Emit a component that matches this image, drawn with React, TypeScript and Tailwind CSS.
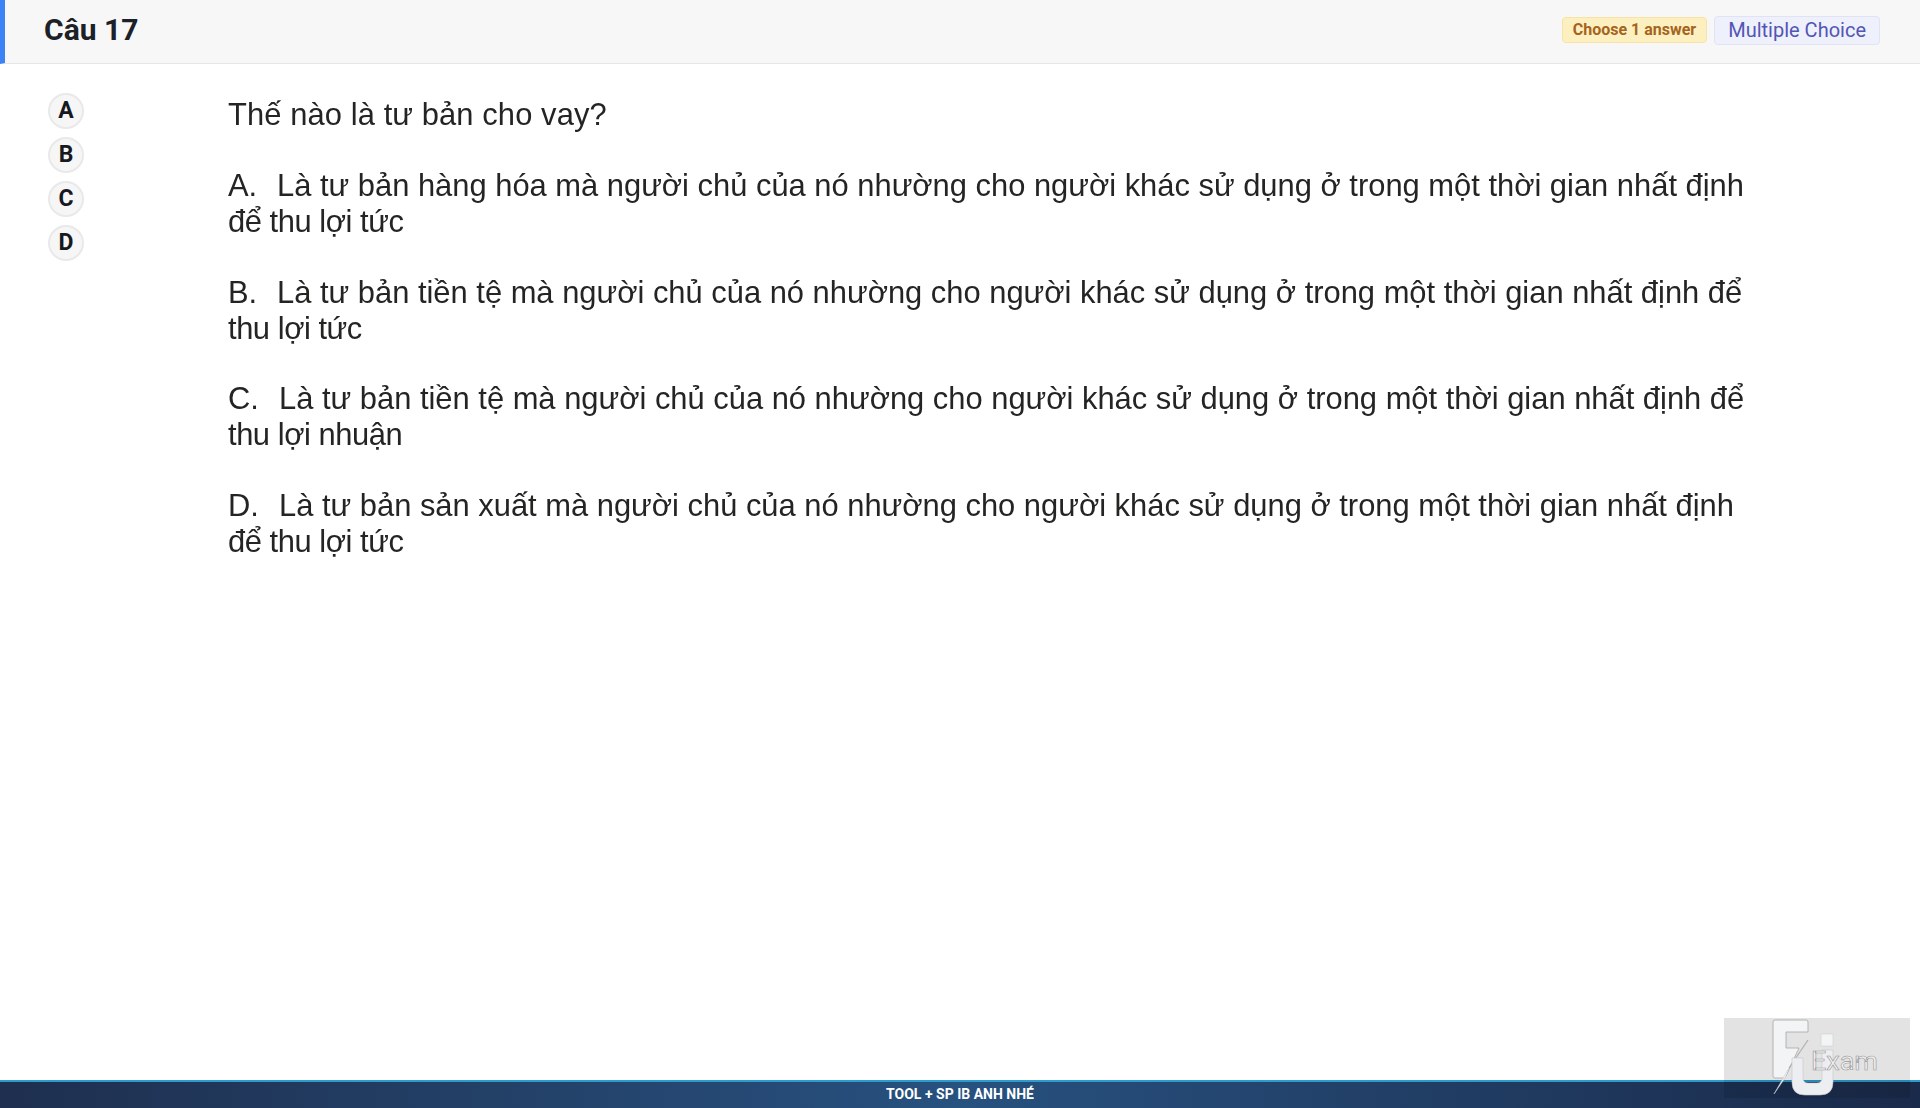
const options = ['A', 'B', 'C', 'D'];

const answers = [
  {
    cls: 'mt-[35px] h-[71px]',
    label: 'A.',
    labelCls: 'w-[49px]',
    first: 'Là tư bản hàng hóa mà người chủ của nó nhường cho người khác sử dụng ở trong một thời gian nhất định',
    second: 'để thu lợi tức',
  },
  {
    cls: 'mt-[36px] h-[71px]',
    label: 'B.',
    labelCls: 'w-[49px]',
    first: 'Là tư bản tiền tệ mà người chủ của nó nhường cho người khác sử dụng ở trong một thời gian nhất định để',
    second: 'thu lợi tức',
  },
  {
    cls: 'mt-[35px] h-[72px]',
    label: 'C.',
    labelCls: 'w-[51px]',
    first: 'Là tư bản tiền tệ mà người chủ của nó nhường cho người khác sử dụng ở trong một thời gian nhất định để',
    second: 'thu lợi nhuận',
  },
  {
    cls: 'mt-[35px] h-[72px]',
    label: 'D.',
    labelCls: 'w-[51px]',
    first: 'Là tư bản sản xuất mà người chủ của nó nhường cho người khác sử dụng ở trong một thời gian nhất định',
    second: 'để thu lợi tức',
  },
];

const FuExamLogo = () => (
  <div className="absolute right-[10px] bottom-[10px] w-[186px] h-[80px] bg-black/[0.11]">
    <svg width="186" height="80" viewBox="0 0 186 80" className="absolute left-0 top-0">
      {/* F */}
      <path
        d="M51 2 H82 Q84 2 84 4 V14 H62 V30 H75 L61 60 H51 Q49 60 49 58 V4 Q49 2 51 2 Z"
        fill="#f3f4f5"
        stroke="#a6a6a6"
        strokeWidth="0.8"
      />
      {/* slash */}
      <path d="M61 60 L50 76 L65 50" fill="#f3f4f5" stroke="#c4c4c4" strokeWidth="0.6" />
      <path d="M84 22 L65 50" stroke="#b0b0b0" strokeWidth="1.2" fill="none" />
      {/* dot */}
      <rect x="97" y="16" width="12" height="12" fill="#f3f4f5" stroke="#d0d0d0" strokeWidth="0.6" />
      {/* U */}
      <path
        d="M68 40 H79 V60 Q79 65 84 65 H93 Q98 65 98 60 V32 H109 V64 Q109 77 96 77 H81 Q68 77 68 64 Z"
        fill="#eceef1"
        stroke="#c8c8c8"
        strokeWidth="0.6"
      />
      <text
        x="87"
        y="52"
        fontFamily="Roboto, sans-serif"
        fontSize="25"
        fill="#f0f1f2"
        stroke="#9a9a9a"
        strokeWidth="0.6"
        textLength="67"
        lengthAdjust="spacingAndGlyphs"
      >
        Exam
      </text>
    </svg>
  </div>
);

export default function App() {
  return (
    <div className="relative flex flex-col h-screen bg-white overflow-hidden font-['Roboto',sans-serif]">
      <header className="flex items-center justify-between h-[64px] shrink-0 bg-[#f7f7f7] border-b border-[#e6e6e6] border-l-[5px] border-l-[#3b82f6] pl-[39px] pr-[40px]">
        <h1 className="text-[30px] font-bold text-[#1c2127] leading-none pb-[3px]">Câu 17</h1>
        <div className="flex items-center gap-[7px] pb-[3px]">
          <span className="flex items-center h-[26px] px-[10px] rounded-[4px] bg-[#fdf0c0] border border-[#f8e3a4] text-[16px] font-bold text-[#a4641f]">
            Choose 1 answer
          </span>
          <span className="flex items-center h-[29px] px-[13px] rounded-[4px] bg-[#eef1fb] border border-[#dfe3f5] text-[20px] text-[#5355b5]">
            Multiple Choice
          </span>
        </div>
      </header>

      <main className="flex flex-1 min-h-0">
        <div className="w-[228px] shrink-0 pl-[48px] pt-[29px] flex flex-col gap-[8px]">
          {options.map((o) => (
            <button
              key={o}
              className="flex items-center justify-center w-[36px] h-[36px] rounded-full bg-[#f6f6f6] border-2 border-[#e9e9e9] text-[23px] font-bold text-[#16191f] leading-none pb-[2px]"
            >
              {o}
            </button>
          ))}
        </div>
        <div className="flex-1 pt-[33px] font-['Liberation_Sans',sans-serif] text-[30.9px] leading-[36px] text-[#242423] blur-[0.5px]">
          <p className="h-[36px] tracking-[0.1px]">Thế nào là tư bản cho vay?</p>
          {answers.map((a) => (
            <div key={a.label} className={a.cls}>
              <p className="flex whitespace-nowrap">
                <span className={a.labelCls}>{a.label}</span>
                <span>{a.first}</span>
              </p>
              <p className="whitespace-nowrap tracking-[-0.45px]">{a.second}</p>
            </div>
          ))}
        </div>
      </main>

      <footer className="flex items-center justify-center h-[28px] shrink-0 border-t-2 border-[#2d9bcb] bg-gradient-to-r from-[#1e2f4f] via-[#27517f] to-[#1a2a4a] text-[14px] font-bold text-white pb-[1px]">
        TOOL + SP IB ANH NHÉ
      </footer>

      <FuExamLogo />
    </div>
  );
}
